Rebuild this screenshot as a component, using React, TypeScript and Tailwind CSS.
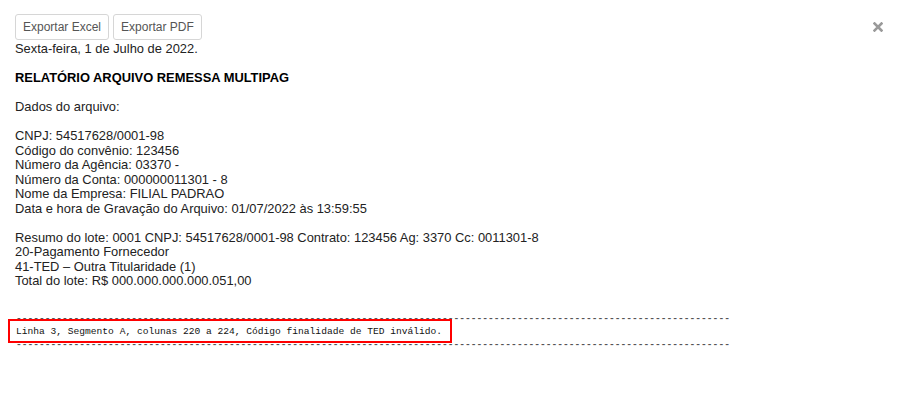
import React from "react";

const dashes = "-".repeat(124);

export default function App() {
  return (
    <div className="relative w-[900px] h-[416px] bg-white text-[#222] overflow-hidden" style={{ fontFamily: '"Liberation Sans", Arial, sans-serif' }}>
      <button className="absolute right-[17px] top-[22px] w-[10px] h-[10px]" aria-label="Fechar">
        <svg viewBox="0 0 10 10" className="w-[10px] h-[10px]">
          <path d="M1.5 1.5 L8.5 8.5 M8.5 1.5 L1.5 8.5" stroke="#9a9a9a" strokeWidth="2.6" strokeLinecap="square" />
        </svg>
      </button>
      <div className="pl-[15px] pt-[14px]">
        <div className="flex gap-[4px]">
          <button className="h-[26px] px-[7px] border border-[#d6d6d6] rounded-[3px] bg-white text-[12px] text-[#555]">Exportar Excel</button>
          <button className="h-[26px] px-[7px] border border-[#d6d6d6] rounded-[3px] bg-white text-[12px] text-[#555]">Exportar PDF</button>
        </div>
        <div className="mt-[2px] text-[12.9px] leading-[14.5px]">
          <div>Sexta-feira, 1 de Julho de 2022.</div>
          <div className="h-[14.5px]" />
          <div className="font-bold text-black">RELATÓRIO ARQUIVO REMESSA MULTIPAG</div>
          <div className="h-[14.5px]" />
          <div>Dados do arquivo:</div>
          <div className="h-[14.5px]" />
          <div>CNPJ: 54517628/0001-98</div>
          <div>Código do convênio: 123456</div>
          <div>Número da Agência: 03370 -</div>
          <div>Número da Conta: 000000011301 - 8</div>
          <div>Nome da Empresa: FILIAL PADRAO</div>
          <div>Data e hora de Gravação do Arquivo: 01/07/2022 às 13:59:55</div>
          <div className="h-[14.5px]" />
          <div>Resumo do lote: 0001 CNPJ: 54517628/0001-98 Contrato: 123456 Ag: 3370 Cc: 0011301-8</div>
          <div>20-Pagamento Fornecedor</div>
          <div>41-TED – Outra Titularidade (1)</div>
          <div>Total do lote: R$ 000.000.000.000.051,00</div>
        </div>
        <div className="relative mt-[23px] text-[9.6px] leading-[13px] text-[#111] whitespace-pre" style={{ fontFamily: '"Liberation Mono", "DejaVu Sans Mono", monospace' }}>
          <div className="pl-[1px] font-bold text-[#555]">{dashes}</div>
          <div className="pl-[1px]">Linha 3, Segmento A, colunas 220 a 224, Código finalidade de TED inválido.</div>
          <div className="pl-[1px] font-bold text-[#555]">{dashes}</div>
          <div className="absolute left-[-7px] top-[7px] w-[444px] h-[24px] border-2 border-[#ff0000]" />
        </div>
      </div>
    </div>
  );
}
